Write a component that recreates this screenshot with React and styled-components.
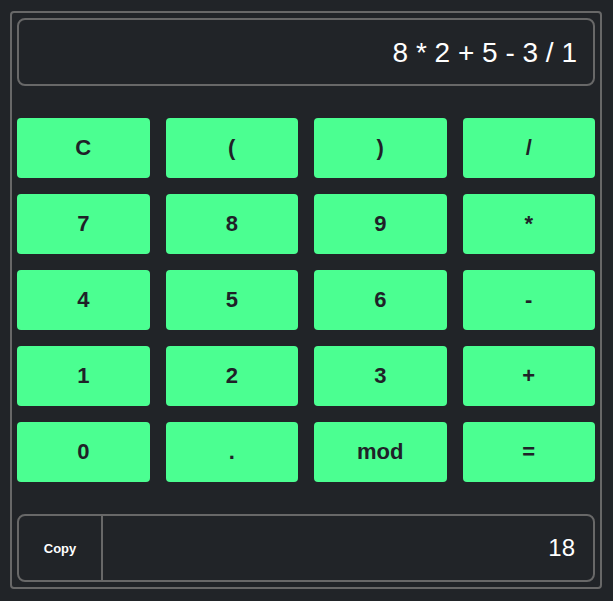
import React from 'react';
import styled, { createGlobalStyle } from 'styled-components';

const Global = createGlobalStyle`
  html, body {
    margin: 0;
    background: #212428;
  }
  body {
    font-family: "Liberation Sans", Arial, sans-serif;
  }
`;

const Calculator = styled.div`
  margin: 11px 11px 12px 10px;
  border: 2px solid #686868;
  border-radius: 4px;
  padding: 5px;
  display: flex;
  flex-direction: column;
  gap: 32px;
`;

const Display = styled.div`
  height: 68px;
  box-sizing: border-box;
  border: 2px solid #686868;
  border-radius: 8px;
  display: flex;
  align-items: center;
  justify-content: flex-end;
  padding: 0 16px;
  color: #ffffff;
  font-size: 28px;
  padding-top: 2px;
`;

const Keys = styled.div`
  display: grid;
  grid-template-columns: repeat(4, 1fr);
  grid-auto-rows: 60px;
  gap: 16px;
`;

const Key = styled.button`
  border: none;
  border-radius: 4px;
  background: #4bff91;
  color: #1f2128;
  font-family: "Liberation Sans", Arial, sans-serif;
  font-weight: bold;
  font-size: 22px;
  padding: 0;
  cursor: pointer;
`;

const Result = styled.div`
  height: 68px;
  box-sizing: border-box;
  border: 2px solid #686868;
  border-radius: 8px;
  display: flex;
  align-items: stretch;
`;

const CopyButton = styled.button`
  width: 84px;
  background: transparent;
  border: none;
  border-right: 2px solid #686868;
  color: #ffffff;
  font-family: "Liberation Sans", Arial, sans-serif;
  font-weight: bold;
  font-size: 13px;
  padding: 0;
  cursor: pointer;
`;

const Output = styled.div`
  flex: 1;
  display: flex;
  align-items: center;
  justify-content: flex-end;
  padding: 0 18px;
  color: #ffffff;
  font-size: 24px;
`;

const keys = ['C', '(', ')', '/', '7', '8', '9', '*', '4', '5', '6', '-', '1', '2', '3', '+', '0', '.', 'mod', '='];

function App() {
  return (
    <>
      <Global />
      <Calculator>
        <Display>8 * 2 + 5 - 3 / 1</Display>
        <Keys>
          {keys.map((k) => (
            <Key key={k}>{k}</Key>
          ))}
        </Keys>
        <Result>
          <CopyButton>Copy</CopyButton>
          <Output>18</Output>
        </Result>
      </Calculator>
    </>
  );
}

export default App;
